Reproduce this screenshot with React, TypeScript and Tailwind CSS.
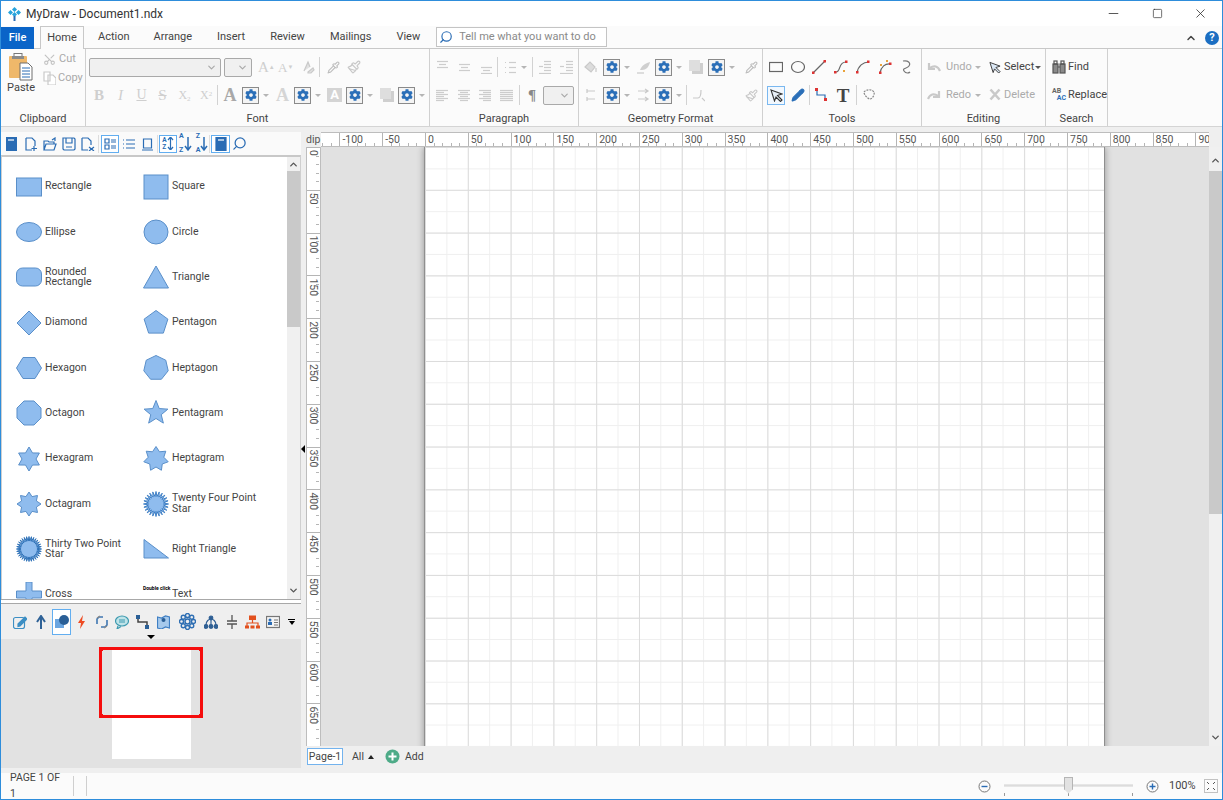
import type { ReactNode } from 'react';
import { Pipette, Paintbrush, Scissors, ChevronUp, ChevronDown, Minus, Square, X, Search, Pencil } from 'lucide-react';
import { FaCog } from 'react-icons/fa';

const GREY = '#c9c9c9';
const BLUE = '#2a6cb4';

function Ico({ w = 14, h = 14, className = '', color = GREY, children }: { w?: number; h?: number; className?: string; color?: string; children: ReactNode }) {
  return (
    <svg width={w} height={h} viewBox={`0 0 ${w} ${h}`} fill="none" stroke={color} strokeWidth="1.2" className={`shrink-0 ${className}`}>
      {children}
    </svg>
  );
}

function GearBox({ className = '' }: { className?: string }) {
  return (
    <div className={`w-[17px] h-[17px] shrink-0 border border-[#8a8a8a] bg-[#f4f4f4] flex items-center justify-center ${className}`}>
      <FaCog size={12} color="#2b6fb8" />
    </div>
  );
}

function Drop({ className = '', dark = false }: { className?: string; dark?: boolean }) {
  return (
    <span className={`w-[6px] flex justify-center shrink-0 ${className}`}>
      <span className={`w-0 h-0 border-x-[3px] border-t-[3px] border-x-transparent ${dark ? 'border-t-[#555]' : 'border-t-[#b5b5b5]'}`} />
    </span>
  );
}

function Sep({ className = '' }: { className?: string }) {
  return <span className={`w-px h-[20px] bg-[#d2d2d2] shrink-0 ${className}`} />;
}

function Combo({ className = '' }: { className?: string }) {
  return (
    <div className={`h-[19px] shrink-0 rounded-[2px] border border-[#a9a9a9] bg-[#f0f0f0] flex items-center justify-end pr-[3px] ${className}`}>
      <ChevronDown size={11} color="#a8a8a8" strokeWidth={2.5} />
    </div>
  );
}

function Glyph({ children, className = '' }: { children: ReactNode; className?: string }) {
  return <span className={`shrink-0 text-center text-[#cfcfcf] [font-family:'Liberation_Serif',serif] leading-none ${className}`}>{children}</span>;
}

function Lines({ w, rows, className = '' }: { w: number; rows: [number, number, number][]; className?: string }) {
  return (
    <Ico w={w} h={14} className={className} color="#cdcdcd">
      {rows.map(([x1, x2, y]) => (
        <line key={`${x1}-${y}`} x1={x1} x2={x2} y1={y + 0.5} y2={y + 0.5} />
      ))}
    </Ico>
  );
}

const justify = (fn: (i: number) => [number, number], w: number) =>
  [2, 4, 6, 8, 10, 12].map((y, i) => {
    const [a, b] = fn(i);
    return [a, Math.min(b, w), y] as [number, number, number];
  });

function Group({ label, className, row1, row2 }: { label: string; className: string; row1: ReactNode; row2: ReactNode }) {
  return (
    <div className={`shrink-0 border-r border-[#d0d0d0] flex flex-col pt-[4px] ${className}`}>
      <div className="h-[28px] flex items-center">{row1}</div>
      <div className="h-[28px] flex items-center">{row2}</div>
      <div className="h-[17px] pt-[3px] text-center text-[11px] leading-[14px] text-[#444]">{label}</div>
    </div>
  );
}

function Ribbon() {
  return (
    <div className="h-[77px] flex bg-[#fbfbfb] shrink-0">
      {/* clipboard */}
      <div className="w-[85px] shrink-0 border-r border-[#d0d0d0] flex flex-col pt-[4px]">
        <div className="h-[56px] flex">
          <div className="ml-[8px] w-[24px] flex flex-col items-center">
            <svg width="24" height="28" viewBox="0 0 24 28" className="shrink-0">
              <rect x="0" y="3" width="18" height="22" fill="#efb86a" rx="1" />
              <rect x="5" y="0.5" width="8" height="5" fill="none" stroke="#777" />
              <rect x="3" y="3" width="12" height="3" fill="#8a8a8a" />
              <path d="M11 10h8l4 4v13H11z" fill="#fff" stroke="#6f6f6f" />
              <path d="M13 15h8M13 18h8M13 21h8M13 24h8" stroke={BLUE} />
            </svg>
            <span className="text-[11px] leading-[14px] mt-[0px] text-[#444]">Paste</span>
          </div>
          <div className="ml-[10px] flex flex-col">
            <div className="h-[14px] mt-[-1px] flex items-center">
              <Scissors size={13} color="#c2c2c2" className="-rotate-90" />
              <span className="ml-[3px] text-[11px] text-[#a9a9a9]">Cut</span>
            </div>
            <div className="h-[14px] mt-[5px] flex items-center">
              <Ico w={13} h={14}>
                <path d="M1 1h6v9H1zM5 4h5l3 3v7H5z" fill="#fff" />
              </Ico>
              <span className="ml-[2px] text-[11px] text-[#a9a9a9]">Copy</span>
            </div>
          </div>
        </div>
        <div className="h-[17px] pt-[3px] text-center text-[11px] leading-[14px] text-[#444]">Clipboard</div>
      </div>

      <Group
        label="Font"
        className="w-[344px]"
        row1={
          <>
            <Combo className="ml-[3px] w-[132px]" />
            <Combo className="ml-[3px] w-[28px]" />
            <Glyph className="ml-[6px] w-[14px] text-[15px] [font-family:'Liberation_Sans',sans-serif]">A<sup className="text-[6px]">▲</sup></Glyph>
            <Glyph className="ml-[6px] w-[14px] text-[13px] [font-family:'Liberation_Sans',sans-serif]">A<sup className="text-[6px]">▼</sup></Glyph>
            <Ico className="ml-[9px]">
              <path d="M3 11L7 2l2 5M7 12l5-4 1 2-3 3H7z" fill="#e2e2e2" />
            </Ico>
            <Sep className="ml-[4px]" />
            <Pipette size={13} color="#bdbdbd" className="ml-[7px] shrink-0" />
            <Paintbrush size={14} color="#c8c8c8" className="ml-[7px] shrink-0" />
          </>
        }
        row2={
          <>
            <Glyph className="ml-[7px] w-[12px] text-[15px] font-bold">B</Glyph>
            <Glyph className="ml-[11px] w-[9px] text-[15px] italic">I</Glyph>
            <Glyph className="ml-[11px] w-[11px] text-[14px] underline">U</Glyph>
            <Glyph className="ml-[10px] w-[11px] text-[15px] line-through">S</Glyph>
            <Glyph className="ml-[10px] w-[13px] text-[12px]">X<sub className="text-[7px]">2</sub></Glyph>
            <Glyph className="ml-[9px] w-[12px] text-[12px]">X<sup className="text-[7px]">2</sup></Glyph>
            <Sep className="ml-[5px]" />
            <Glyph className="ml-[5px] w-[14px] text-[18px] !text-[#a8a8a8] [font-family:'Liberation_Sans',sans-serif] font-bold">A</Glyph>
            <GearBox className="ml-[5px]" />
            <Drop className="ml-[4px]" />
            <Glyph className="ml-[6px] w-[15px] text-[18px] !text-[#d5d5d5] [font-family:'Liberation_Sans',sans-serif] font-bold">A</Glyph>
            <GearBox className="ml-[4px]" />
            <Drop className="ml-[4px]" />
            <span className="ml-[6px] w-[15px] h-[14px] shrink-0 bg-[#d4d4d4] text-white font-bold text-[13px] leading-[14px] text-center">A</span>
            <GearBox className="ml-[4px]" />
            <Drop className="ml-[4px]" />
            <Ico className="ml-[7px]">
              <rect x="3" y="3" width="11" height="11" fill="#cfcfcf" stroke="none" />
              <rect x="0" y="0" width="11" height="11" fill="#dedede" stroke="none" />
            </Ico>
            <GearBox className="ml-[4px]" />
            <Drop className="ml-[4px]" />
          </>
        }
      />

      <Group
        label="Paragraph"
        className="w-[149px]"
        row1={
          <>
            <Lines w={11} className="ml-[7px]" rows={[[0, 11, 1], [2, 9, 4], [0, 11, 7]]} />
            <Lines w={11} className="ml-[11px]" rows={[[0, 11, 4], [2, 9, 7], [0, 11, 10]]} />
            <Lines w={11} className="ml-[11px]" rows={[[0, 11, 7], [2, 9, 10], [0, 11, 13]]} />
            <Sep className="ml-[5px]" />
            <Lines w={11} className="ml-[7px]" rows={[[0, 1, 2], [4, 11, 2], [0, 1, 7], [4, 11, 7], [0, 1, 12], [4, 11, 12]]} />
            <Drop className="ml-[5px]" />
            <Sep className="ml-[5px]" />
            <Lines w={12} className="ml-[6px]" rows={[[5, 12, 1], [5, 12, 4], [0, 4, 6], [5, 12, 7], [5, 12, 10], [0, 12, 13]]} />
            <Lines w={13} className="ml-[9px]" rows={[[6, 13, 1], [6, 13, 4], [0, 4, 6], [6, 13, 7], [6, 13, 10], [0, 13, 13]]} />
          </>
        }
        row2={
          <>
            <Lines w={12} className="ml-[6px]" rows={justify((i) => [0, i % 2 ? 8 : 12], 12)} />
            <Lines w={12} className="ml-[10px]" rows={justify((i) => (i % 2 ? [2, 10] : [0, 12]), 12)} />
            <Lines w={12} className="ml-[9px]" rows={justify((i) => (i % 2 ? [4, 12] : [0, 12]), 12)} />
            <Lines w={13} className="ml-[9px]" rows={justify(() => [0, 13], 13)} />
            <Sep className="ml-[6px]" />
            <span className="ml-[8px] w-[9px] shrink-0 text-[15px] leading-none font-bold text-[#888] [font-family:'Liberation_Serif',serif]">¶</span>
            <Combo className="ml-[6px] w-[31px]" />
          </>
        }
      />

      <Group
        label="Geometry Format"
        className="w-[184px]"
        row1={
          <>
            <Ico className="ml-[5px]">
              <path d="M1 7l5-5 5 5-4 5zM12 8v4" fill="#dcdcdc" />
            </Ico>
            <GearBox className="ml-[5px]" />
            <Drop className="ml-[4px]" />
            <Ico className="ml-[7px]">
              <path d="M3 10C5 5 9 3 13 2c-1 5-4 8-8 8z" fill="#cfcfcf" stroke="none" />
              <path d="M0 13h7" />
            </Ico>
            <GearBox className="ml-[4px]" />
            <Drop className="ml-[4px]" />
            <Ico className="ml-[7px]">
              <rect x="3" y="3" width="11" height="11" fill="#cfcfcf" stroke="none" />
              <rect x="0" y="0" width="11" height="11" fill="#dedede" stroke="none" />
            </Ico>
            <GearBox className="ml-[5px]" />
            <Drop className="ml-[4px]" />
            <Pipette size={13} color="#bdbdbd" className="ml-[10px] shrink-0" />
          </>
        }
        row2={
          <>
            <Ico w={10} className="ml-[7px]">
              <path d="M1 1v4M1 3h8M1 9v4M1 11h8" />
            </Ico>
            <GearBox className="ml-[7px]" />
            <Drop className="ml-[4px]" />
            <Ico w={12} className="ml-[8px]">
              <path d="M0 3h9M7 1l3 2-3 2M0 11h9M7 9l3 2-3 2" />
            </Ico>
            <GearBox className="ml-[5px]" />
            <Drop className="ml-[4px]" />
            <Sep className="ml-[4px]" />
            <Ico w={12} className="ml-[6px]">
              <path d="M0 10h5c2 0 3-2 3-8M9 10l3 3" />
            </Ico>
            <Paintbrush size={13} color="#c8c8c8" className="ml-[40px] shrink-0" />
          </>
        }
      />

      <Group
        label="Tools"
        className="w-[159px]"
        row1={
          <>
            <Ico className="ml-[6px]" color="#666"><rect x="0.5" y="2.5" width="13" height="9" /></Ico>
            <Ico className="ml-[8px]" color="#666"><ellipse cx="7" cy="7" rx="6.5" ry="5.5" /></Ico>
            <Ico className="ml-[7px]" color="#666">
              <path d="M1 13L13 1" />
              <rect x="0" y="11.5" width="2.5" height="2.5" fill="#d33" stroke="none" />
              <rect x="11.5" y="0" width="2.5" height="2.5" fill="#d33" stroke="none" />
            </Ico>
            <Ico className="ml-[8px]" color="#666">
              <path d="M2 12C7 12 4 2 12 2" />
              <rect x="0" y="11" width="2.5" height="2.5" fill="#d33" stroke="none" />
              <rect x="11" y="0.5" width="2.5" height="2.5" fill="#d33" stroke="none" />
              <rect x="9" y="10" width="2" height="2" fill="#e9a23b" stroke="none" />
            </Ico>
            <Ico className="ml-[8px]" color="#666">
              <path d="M1 13C2 6 7 2 13 2" />
              <rect x="0" y="11" width="2.5" height="2.5" fill="#d33" stroke="none" />
              <rect x="11" y="0.5" width="2.5" height="2.5" fill="#d33" stroke="none" />
            </Ico>
            <Ico className="ml-[8px]" color="#666">
              <path d="M2 13C3 7 7 3 13 4" />
              <rect x="1" y="11.5" width="2.5" height="2.5" fill="#d33" stroke="none" />
              <rect x="11" y="2.5" width="2.5" height="2.5" fill="#d33" stroke="none" />
              <rect x="2" y="4" width="2" height="2" fill="#e9a23b" stroke="none" />
              <rect x="8" y="0" width="2" height="2" fill="#e9a23b" stroke="none" />
            </Ico>
            <Ico w={12} className="ml-[8px]" color="#777">
              <path d="M3 1c5-1 8 2 6 5S2 8 4 11s5 2 6 1" />
            </Ico>
          </>
        }
        row2={
          <>
            <div className="ml-[4px] w-[18px] h-[19px] shrink-0 border border-[#7ab8f0] bg-[#f2f8fe] flex items-center justify-center">
              <svg width="13" height="13" viewBox="0 0 13 13" fill="#e8f0f8" stroke="#333" strokeWidth="1.1"><path d="M1 1l11 4-4.5 1.5L12 11l-1.5 1.5L6 8l-1.5 4z" /></svg>
            </div>
            <Pencil size={14} color="#2b6fb8" fill="#2b6fb8" className="ml-[6px] shrink-0" />
            <Sep className="ml-[4px]" />
            <Ico className="ml-[5px]" color={BLUE}>
              <path d="M2 1v6h8v5" />
              <rect x="0" y="0" width="3" height="3" fill="#d33" stroke="none" />
              <rect x="9" y="10" width="3" height="3" fill="#d33" stroke="none" />
            </Ico>
            <span className="ml-[7px] w-[14px] shrink-0 text-[19px] leading-none font-bold text-center text-[#444] [font-family:'Liberation_Serif',serif]">T</span>
            <Sep className="ml-[6px]" />
            <Ico w={12} className="ml-[6px]" color="#888">
              <path d="M1 4c2-3 8-3 10 0 1 3-2 7-4 7S1 7 1 4z" strokeDasharray="2 1" />
            </Ico>
          </>
        }
      />

      <Group
        label="Editing"
        className="w-[124px]"
        row1={
          <>
            <Ico className="ml-[5px]"><path d="M13 11C11 6 7 5 3 8M2 3v6h6" strokeWidth="2.2" /></Ico>
            <span className="ml-[5px] w-[26px] text-[11px] text-[#ababab]">Undo</span>
            <Drop className="ml-[3px]" />
            <svg width="12" height="13" viewBox="0 0 13 13" fill="#dbe8f5" stroke="#333" strokeWidth="1" className="ml-[8px] shrink-0"><path d="M1 1l11 4-4.5 1.5L12 11l-1.5 1.5L6 8l-1.5 4z" /></svg>
            <span className="ml-[3px] w-[27px] text-[11px] text-[#444]">Select</span>
            <Drop dark className="ml-[4px]" />
          </>
        }
        row2={
          <>
            <Ico className="ml-[5px]"><path d="M1 11C3 6 7 5 11 8M12 3v6H6" strokeWidth="2.2" /></Ico>
            <span className="ml-[5px] w-[26px] text-[11px] text-[#ababab]">Redo</span>
            <Drop className="ml-[3px]" />
            <Ico w={12} className="ml-[8px]"><path d="M1.5 1.5l9 10M10.5 1.5l-9 10" strokeWidth="2.6" /></Ico>
            <span className="ml-[3px] text-[11px] text-[#ababab]">Delete</span>
          </>
        }
      />

      <Group
        label="Search"
        className="w-[62px]"
        row1={
          <>
            <Ico className="ml-[6px]" color="#555">
              <rect x="1" y="4" width="5" height="9" fill="#8a8a8a" />
              <rect x="8" y="4" width="5" height="9" fill="#8a8a8a" />
              <rect x="2" y="1" width="3" height="3" />
              <rect x="9" y="1" width="3" height="3" />
              <path d="M6 7h2" />
            </Ico>
            <span className="ml-[2px] text-[11px] text-[#444]">Find</span>
          </>
        }
        row2={
          <>
            <span className="ml-[6px] w-[14px] shrink-0 flex flex-col text-[7px] leading-[7px] font-bold">
              <span className="text-[#666]">AB</span>
              <span className="text-[#2b6fb8] text-right">AC</span>
            </span>
            <span className="ml-[2px] text-[11px] text-[#444]">Replace</span>
          </>
        }
      />
    </div>
  );
}

function polar(n: number, radii: number[], rot = -90) {
  const pts: string[] = [];
  for (let i = 0; i < n * radii.length; i++) {
    const a = ((rot + (360 * i) / (n * radii.length)) * Math.PI) / 180;
    const r = radii[i % radii.length];
    pts.push(`${(13 + r * Math.cos(a)).toFixed(2)},${(13 + r * Math.sin(a)).toFixed(2)}`);
  }
  return pts.join(' ');
}

const FILL = '#8fbcee';
const EDGE = '#5a8fc9';

function Shape({ children, edge = EDGE }: { children: ReactNode; edge?: string }) {
  return (
    <svg width="26" height="26" viewBox="0 0 26 26" fill={FILL} stroke={edge} className="shrink-0">
      {children}
    </svg>
  );
}

const shapes: { label: ReactNode; icon: ReactNode }[] = [
  { label: 'Rectangle', icon: <rect x="0.5" y="4" width="25" height="18" /> },
  { label: 'Square', icon: <rect x="1" y="1" width="24" height="24" /> },
  { label: 'Ellipse', icon: <ellipse cx="13" cy="13" rx="12.5" ry="9.5" /> },
  { label: 'Circle', icon: <circle cx="13" cy="13" r="12" /> },
  { label: <>Rounded<br />Rectangle</>, icon: <rect x="0.5" y="4" width="25" height="18" rx="6" /> },
  { label: 'Triangle', icon: <polygon points="13,2 25.5,24 0.5,24" /> },
  { label: 'Diamond', icon: <polygon points="13,1 25,13 13,25 1,13" /> },
  { label: 'Pentagon', icon: <polygon points={polar(5, [12.5])} /> },
  { label: 'Hexagon', icon: <polygon points="7,2.5 19,2.5 25.5,13 19,23.5 7,23.5 0.5,13" /> },
  { label: 'Heptagon', icon: <polygon points={polar(7, [12.5])} /> },
  { label: 'Octagon', icon: <polygon points={polar(8, [13], -67.5)} /> },
  { label: 'Pentagram', icon: <polygon points={polar(5, [12.5, 5.5])} /> },
  { label: 'Hexagram', icon: <polygon points={polar(6, [12, 7])} /> },
  { label: 'Heptagram', icon: <polygon points={polar(7, [12.5, 8])} /> },
  { label: 'Octagram', icon: <polygon points={polar(8, [12, 8])} /> },
  { label: <>Twenty Four Point<br />Star</>, icon: <polygon points={polar(24, [12.5, 7.5])} stroke="#3f7fc4" /> },
  { label: <>Thirty Two Point<br />Star</>, icon: <polygon points={polar(32, [12.5, 8])} stroke="#2f72b8" /> },
  { label: 'Right Triangle', icon: <polygon points="1,3.5 25.5,22 1,22" /> },
  { label: 'Cross', icon: <polygon points="10,0 16,0 16,9 25.5,9 25.5,16 16,16 16,25 10,25 10,16 0.5,16 0.5,9 10,9" /> },
  { label: 'Text', icon: null },
];

function ShapeList() {
  return (
    <div className="flex-1 min-h-0 relative flex bg-white border-x border-[#cfcfcf] border-t-2 border-t-[#c8c8c8] overflow-hidden">
      <div className="flex-1 pt-[7px] grid grid-cols-[127px_1fr] auto-rows-[45.33px] content-start">
        {shapes.map((s, i) => (
          <div key={i} className="flex items-center pl-[14px] gap-[3px] text-[10.5px] leading-[10.5px] text-[#444]">
            {s.icon ? (
              <Shape>{s.icon}</Shape>
            ) : (
              <span className="w-[26px] shrink-0 text-[5px] leading-[6px] font-bold text-black text-center whitespace-nowrap -mt-[14px]">Double click</span>
            )}
            <span>{s.label}</span>
          </div>
        ))}
      </div>
      <div className="w-[13px] shrink-0 bg-[#f0f0f0] flex flex-col items-center">
        <div className="h-[14px] flex items-center"><ChevronUp size={11} color="#555" strokeWidth={3} /></div>
        <div className="w-full h-[156px] bg-[#c9c9c9]" />
        <div className="flex-1" />
        <div className="h-[17px] flex items-center"><ChevronDown size={11} color="#555" strokeWidth={3} /></div>
      </div>
    </div>
  );
}

function LeftToolbar() {
  const c = BLUE;
  return (
    <div className="h-[23px] shrink-0 flex items-center bg-[#fafafa]">
      <Ico w={11} className="ml-[5px]" color={c}><rect x="0.5" y="0.5" width="10" height="13" fill={c} /><path d="M2 3h6" stroke="#fff" /></Ico>
      <Ico w={13} className="ml-[8px]" color={c}><path d="M1 1h6l3 3v5M1 1v12h6M9 9v5M6.5 11.5H12" /></Ico>
      <Ico className="ml-[5px]" color={c}><path d="M1 13V4h4l1 1h5v2M1 13l2-6h10l-2 6zM9 3l3-2v3" /></Ico>
      <Ico className="ml-[5px]" color={c}><path d="M1 1h11l1 1v10l-1 1H2l-1-1zM4 1v5h6V1M4 10h6" /></Ico>
      <Ico className="ml-[5px]" color={c}><path d="M1 1h6l3 3v4M1 1v12h6M8 10l5 4M13 10l-5 4" /></Ico>
      <span className="ml-[3px] w-px h-[18px] bg-[#ddd]" />
      <div className="ml-[2px] w-[18px] h-[18px] shrink-0 border border-[#62aef0] bg-white flex items-center justify-center">
        <Ico w={13} h={12} color={c}><path d="M1 1h4v4H1zM1 7h4v4H1zM7 2h5M7 4h5M7 8h5M7 10h5" /></Ico>
      </div>
      <Ico w={12} className="ml-[4px]" color={c}><path d="M0 3h1M3 3h9M0 7h1M3 7h9M0 11h1M3 11h9" /></Ico>
      <Ico w={11} className="ml-[7px]" color={c}><path d="M1.5 2h8v9h-8zM0 13h11" /></Ico>
      <span className="ml-[4px] w-px h-[18px] bg-[#ddd]" />
      <div className="ml-[1px] w-[18px] h-[18px] shrink-0 border border-[#62aef0] bg-white flex items-center justify-center text-[6.5px] leading-[7px] font-bold text-[#2a6cb4]">
        <span>A<br />Z</span>
        <Ico w={7} h={13} color={c}><path d="M3.5 0v13M1 10l2.5 3L6 10M1 3l2.5-3L6 3" /></Ico>
      </div>
      <span className="ml-[2px] flex items-center text-[7px] leading-[7px] font-bold text-[#2a6cb4] shrink-0"><span>A<br /><br />Z</span><Ico w={8} h={15} color={c}><path d="M4 1v13M1 10l3 4 3-4" strokeWidth="1.5" /></Ico></span>
      <span className="ml-[4px] flex items-center text-[7px] leading-[7px] font-bold text-[#2a6cb4] shrink-0"><span>Z<br /><br />A</span><Ico w={8} h={15} color={c}><path d="M4 1v13M1 10l3 4 3-4" strokeWidth="1.5" /></Ico></span>
      <span className="ml-[1px] w-px h-[18px] bg-[#ddd]" />
      <div className="ml-[1px] w-[19px] h-[18px] shrink-0 border border-[#62aef0] bg-white flex items-center justify-center">
        <Ico w={12} color={c}><rect x="1" y="0.5" width="10" height="13" fill={c} /><path d="M3 3h6" stroke="#fff" /></Ico>
      </div>
      <Search size={15} color={c} strokeWidth={2} className="ml-[2px] shrink-0 -scale-x-100" />
    </div>
  );
}

function LowerToolbar() {
  return (
    <div className="h-[35px] shrink-0 relative flex items-center">
      <Ico className="ml-[12px]" color="#3d8fc4"><rect x="0.5" y="2.5" width="11" height="11" rx="2" /><path d="M5 9l7-7 2 2-7 7-2 .5z" fill="#3d8fc4" /></Ico>
      <Ico w={10} className="ml-[9px]" color="#2f6297"><path d="M5 14V2M1 7l4-6 4 6" strokeWidth="2" /></Ico>
      <div className="ml-[6px] w-[19px] h-[26px] shrink-0 border border-[#62aef0] bg-white flex items-center justify-center">
        <svg width="14" height="13" viewBox="0 0 14 13"><rect x="0" y="4" width="9" height="9" fill="#6aa5e0" /><circle cx="9" cy="5" r="5" fill="#2a5f96" /></svg>
      </div>
      <Ico w={9} className="ml-[6px]" color="#ee4b22"><path d="M6 0L1 8h3l-1 6 5-8H5z" fill="#ee4b22" stroke="none" /></Ico>
      <Ico className="ml-[9px]" color="#3f77b2"><path d="M2 9V4l2-2h4M12 5v5l-2 2H6" strokeWidth="1.6" /><path d="M2 3l3-2M12 11l-3 2" stroke="#8a8a8a" /></Ico>
      <Ico className="ml-[6px]" color="#3d9ab0"><ellipse cx="7" cy="6" rx="6.5" ry="5" fill="#bfe3e8" /><path d="M3 11l-1 3 4-2.5M4 5h6M4 7h6" /></Ico>
      <Ico className="ml-[7px]" color="#444"><path d="M2 2v5h9v5" strokeWidth="1.5" /><rect x="0" y="0" width="4" height="4" fill="#2a5f96" stroke="none" /><rect x="9" y="10" width="4" height="4" fill="#2a5f96" stroke="none" /></Ico>
      <Ico w={13} className="ml-[7px]" color="#3f7fc4"><path d="M0.5 2l4 1 4-2 4 1v11l-4-1-4 2-4-1z" fill="#a6c9ec" /><circle cx="6.5" cy="5" r="2" fill="#2a5f96" stroke="none" /></Ico>
      <Ico w={17} h={17} className="ml-[9px]" color="#2f6fb3">
        <circle cx="8.5" cy="8.5" r="2.5" strokeWidth="1.5" />
        {[0, 45, 90, 135, 180, 225, 270, 315].map((a) => (
          <circle key={a} cx={8.5 + 6 * Math.cos((a * Math.PI) / 180)} cy={8.5 + 6 * Math.sin((a * Math.PI) / 180)} r="2" strokeWidth="1.4" />
        ))}
      </Ico>
      <Ico className="ml-[8px]" color="#2f5f94">
        <circle cx="7" cy="3" r="1.8" fill="#2f5f94" /><circle cx="2" cy="11.5" r="1.8" fill="#2f5f94" /><circle cx="7" cy="11.5" r="1.8" fill="#2f5f94" /><circle cx="12" cy="11.5" r="1.8" fill="#2f5f94" />
        <path d="M2 10c0-4 3-6 5-6s5 2 5 6M7 5v5" />
      </Ico>
      <Ico w={10} className="ml-[9px]" color="#555"><path d="M5 0v6M5 9v5M0 6h10M0 9h10" strokeWidth="1.3" /></Ico>
      <Ico w={15} className="ml-[8px]" color="#e2501e">
        <rect x="4" y="0.5" width="7" height="4.5" fill="#e2501e" stroke="none" />
        <path d="M7.5 5v3M2 11V8h11v3" />
        <rect x="0" y="10.5" width="4" height="3" fill="#e2501e" stroke="none" />
        <rect x="5.5" y="10.5" width="4" height="3" fill="#e2501e" stroke="none" />
        <rect x="11" y="10.5" width="4" height="3" fill="#e2501e" stroke="none" />
      </Ico>
      <Ico className="ml-[6px]" color="#777"><rect x="0.5" y="1.5" width="13" height="11" fill="#f4f4f4" /><circle cx="4" cy="5" r="1.5" fill="#2a6cb4" stroke="none" /><rect x="2" y="7" width="4" height="3" fill="#2a6cb4" stroke="none" /><path d="M8 5h4M8 7.5h4M8 10h4" /></Ico>
      <span className="ml-[8px] flex flex-col items-center gap-[1px]">
        <span className="w-[7px] h-[1px] bg-black" />
        <span className="w-0 h-0 border-x-[3.5px] border-t-[4px] border-x-transparent border-t-black" />
      </span>
      <span className="absolute left-[146px] bottom-[0px] w-0 h-0 border-x-[4px] border-t-[4px] border-x-transparent border-t-black" />
    </div>
  );
}

function Overview() {
  return (
    <div className="h-[129px] shrink-0 bg-[#e2e2e2] flex justify-center pt-[10px] relative">
      <div className="w-[79px] h-[110px] bg-white" />
      {/* viewport marker lies over the page thumbnail */}
      <div className="absolute left-[98px] top-[8px] w-[104px] h-[71px] border-[3px] border-[#f50d0d]">
        <span className="absolute -left-[3px] -top-[3px] w-[4px] h-[4px] bg-[#f50d0d]" />
        <span className="absolute -right-[3px] -top-[3px] w-[4px] h-[4px] bg-[#f50d0d]" />
        <span className="absolute -left-[3px] -bottom-[3px] w-[4px] h-[4px] bg-[#f50d0d]" />
        <span className="absolute -right-[3px] -bottom-[3px] w-[4px] h-[4px] bg-[#f50d0d]" />
      </div>
    </div>
  );
}

const SCALE = 42.8 / 50;

function TopRuler() {
  const origin = 104;
  const labels: number[] = [];
  for (let v = -100; v <= 900; v += 50) labels.push(v);
  const ticks: number[] = [];
  for (let v = -120; v <= 900; v += 10) ticks.push(v);
  return (
    <svg width="888" height="15" className="block shrink-0 bg-white border-y border-[#bdbdbd]">
      {ticks.map((v) => {
        const x = Math.round(origin + v * SCALE) + 0.5;
        return v % 50 === 0 ? <line key={v} x1={x} x2={x} y1={0} y2={15} stroke="#b5b5b5" /> : <line key={v} x1={x} x2={x} y1={10} y2={13} stroke="#b5b5b5" />;
      })}
      {labels.map((v) => (
        <text key={v} x={origin + v * SCALE + 3} y={10} fontSize="10.5" fill="#555">{v}</text>
      ))}
    </svg>
  );
}

function SideRuler() {
  const ticks: number[] = [];
  for (let v = 0; v <= 700; v += 10) ticks.push(v);
  return (
    <svg width="15" height="599" className="block shrink-0 bg-white border-x border-[#bdbdbd]">
      {ticks.map((v) => {
        const y = Math.round(v * SCALE) + 0.5;
        return v % 50 === 0 ? <line key={v} x1={0} x2={15} y1={y} y2={y} stroke="#b5b5b5" /> : <line key={v} x1={9} x2={12} y1={y} y2={y} stroke="#b5b5b5" />;
      })}
      {ticks.filter((v) => v % 50 === 0).map((v) => (
        <text key={v} transform={`translate(2.5 ${v * SCALE + 3}) rotate(90)`} fontSize="10.5" fill="#555">{v}</text>
      ))}
    </svg>
  );
}

function Canvas() {
  return (
    <div className="w-[888px] h-[599px] shrink-0 bg-[#e1e1e1] pl-[103px] overflow-hidden">
      <div className="w-[681px] h-[640px] border-x border-[#8f8f8f] shadow-[0_0_7px_rgba(0,0,0,0.35)] bg-white bg-[linear-gradient(to_right,#dcdcdc_1px,transparent_1px),linear-gradient(to_bottom,#dcdcdc_1px,transparent_1px),linear-gradient(to_right,#efefef_1px,transparent_1px),linear-gradient(to_bottom,#efefef_1px,transparent_1px)] [background-size:42.8px_42.8px,42.8px_42.8px,21.4px_21.4px,21.4px_21.4px]" />
    </div>
  );
}

function RightScroll() {
  return (
    <div className="w-[13px] h-[599px] shrink-0 bg-[#f0f0f0] flex flex-col items-center">
      <div className="h-[24px] pt-[2px] flex items-center"><ChevronUp size={11} color="#555" strokeWidth={3} /></div>
      <div className="w-full h-[343px] bg-[#c9c9c9]" />
      <div className="flex-1" />
      <div className="h-[18px] flex items-center"><ChevronDown size={11} color="#555" strokeWidth={3} /></div>
    </div>
  );
}

function PageTabs() {
  return (
    <div className="h-[26px] flex items-start pt-[2px] text-[10.5px] text-[#444]">
      <div className="ml-[1px] w-[36px] h-[17px] border border-[#73b3ee] bg-white flex items-center justify-center">Page-1</div>
      <span className="ml-[9px] leading-[17px]">All</span>
      <span className="ml-[4px] mt-[7px] w-0 h-0 border-x-[3px] border-b-[4px] border-x-transparent border-b-[#222]" />
      <svg width="15" height="15" viewBox="0 0 15 15" className="ml-[11px] mt-[1px] shrink-0">
        <circle cx="7.5" cy="7.5" r="7" fill="#4eab88" />
        <path d="M7.5 3.5v8M3.5 7.5h8" stroke="#fff" strokeWidth="2" />
      </svg>
      <span className="ml-[5px] leading-[17px]">Add</span>
    </div>
  );
}

function StatusBar() {
  return (
    <div className="h-[26px] shrink-0 bg-[#fbfbfb] flex items-center text-[10.5px] text-[#444]">
      <span className="ml-[9px] w-[58px]">PAGE 1 OF 1</span>
      <span className="ml-[5px] w-px h-[20px] bg-[#cfcfcf]" />
      <span className="ml-[12px] w-px h-[20px] bg-[#cfcfcf]" />
      <svg width="13" height="13" viewBox="0 0 13 13" className="ml-[891px] shrink-0" fill="none">
        <circle cx="6.5" cy="6.5" r="5.5" stroke="#777" />
        <path d="M3.5 6.5h6" stroke={BLUE} strokeWidth="1.4" />
      </svg>
      <div className="ml-[13px] w-[129px] h-[20px] shrink-0 flex flex-col">
        <div className="mt-[8px] h-[3px] bg-[#dcdcdc] border-y border-[#e6e6e6]" />
        <div className="mt-[6px] flex justify-between">
          <span className="w-px h-[3px] bg-[#999]" />
          <span className="w-px h-[3px] bg-[#999]" />
          <span className="w-px h-[3px] bg-[#999]" />
        </div>
      </div>
      <div className="relative -ml-[69px] w-[9px] h-[17px] shrink-0 bg-[#e2e2e2] border border-[#b5b5b5] [clip-path:polygon(0_0,100%_0,100%_75%,50%_100%,0_75%)] -mt-[2px]" />
      <svg width="13" height="13" viewBox="0 0 13 13" className="ml-[73px] shrink-0" fill="none">
        <circle cx="6.5" cy="6.5" r="5.5" stroke="#777" />
        <path d="M3.5 6.5h6M6.5 3.5v6" stroke={BLUE} strokeWidth="1.4" />
      </svg>
      <span className="ml-[10px] w-[25px] text-[11px]">100%</span>
      <svg width="14" height="14" viewBox="0 0 14 14" className="ml-[10px] shrink-0" fill="none" stroke="#888">
        <rect x="0.5" y="0.5" width="13" height="13" strokeDasharray="1 1" />
        <path d="M3 3l2 2M11 3L9 5M3 11l2-2M11 11L9 9" stroke="#555" />
      </svg>
    </div>
  );
}

const tabs = ['Action', 'Arrange', 'Insert', 'Review', 'Mailings', 'View'];
const tabMargins = ['ml-[14px]', 'ml-[24px]', 'ml-[25px]', 'ml-[25px]', 'ml-[25px]', 'ml-[25px]'];

export default function App() {
  return (
    <div className="w-[1223px] h-[800px] overflow-hidden flex flex-col bg-white border border-[#2e8ddb] [font-family:Roboto,sans-serif]">
      <div className="h-[25px] shrink-0 flex items-center">
        <svg width="13" height="14" viewBox="0 0 13 14" className="ml-[7px] shrink-0" fill="#27a3dc">
          <polygon points="6.5,0 9,2.5 6.5,5 4,2.5" />
          <polygon points="2.5,3 5,5.5 2.5,8 0,5.5" />
          <polygon points="10.5,3 13,5.5 10.5,8 8,5.5" />
          <polygon points="6.5,5 9,7.5 6.5,10 4,7.5" />
          <rect x="5.5" y="9" width="2" height="5" fill="#2a6cb4" />
        </svg>
        <span className="ml-[5px] text-[12px] text-[#333]">MyDraw - Document1.ndx</span>
        <div className="ml-auto flex items-center">
          <Minus size={15} color="#333" strokeWidth={1.3} />
          <Square size={11} color="#333" strokeWidth={1.5} className="ml-[31px]" />
          <X size={15} color="#333" strokeWidth={1.3} className="ml-[30px] mr-[14px]" />
        </div>
      </div>

      <div className="h-[23px] shrink-0 flex items-end bg-[#fbfbfb] border-b border-[#c8c8c8] text-[11px] text-[#444]">
        <div className="w-[33px] h-[22px] -mb-px bg-[#0a64c8] text-white font-medium text-center leading-[21px]">File</div>
        <div className="ml-[6px] w-[44px] h-[23px] -mb-px bg-[#fbfbfb] border-x border-t border-[#c8c8c8] text-center leading-[22px]">Home</div>
        {tabs.map((t, i) => (
          <span key={t} className={`h-[22px] leading-[22px] ${tabMargins[i]}`}>{t}</span>
        ))}
        <div className="ml-[16px] mb-[1px] w-[171px] h-[20px] border border-[#c4c4c4] bg-white flex items-center">
          <Search size={14} color={BLUE} className="ml-[2px] -scale-x-100 shrink-0" />
          <span className="ml-[6px] text-[#8a8a8a]">Tell me what you want to do</span>
        </div>
        <div className="ml-auto flex items-center mb-[3px] mr-[3px]">
          <ChevronUp size={12} color="#444" strokeWidth={3} />
          <span className="ml-[8px] w-[14px] h-[14px] rounded-full bg-[#1b6ec2] text-white text-[11px] leading-[14px] font-bold text-center">?</span>
        </div>
      </div>

      <Ribbon />

      <div className="flex-1 min-h-0 flex bg-[#efefef] border-t border-[#d4d4d4]">
        <div className="w-[300px] shrink-0 flex flex-col pt-[5px] pb-[5px]">
          <LeftToolbar />
          <ShapeList />
          <div className="h-[5px] shrink-0 bg-white border-y border-[#a8a8a8]" />
          <LowerToolbar />
          <Overview />
        </div>
        <div className="w-[5px] shrink-0 flex items-center">
          <span className="mt-[-2px] w-0 h-0 border-y-[4px] border-r-[4px] border-y-transparent border-r-black" />
        </div>
        <div className="flex-1 min-w-0 flex flex-col pt-[5px]">
          <div className="flex h-[15px] shrink-0">
            <div className="w-[15px] text-[10.5px] leading-[15px] text-[#555]">dip</div>
            <TopRuler />
          </div>
          <div className="flex shrink-0">
            <SideRuler />
            <Canvas />
            <RightScroll />
          </div>
          <PageTabs />
        </div>
      </div>

      <StatusBar />
    </div>
  );
}
